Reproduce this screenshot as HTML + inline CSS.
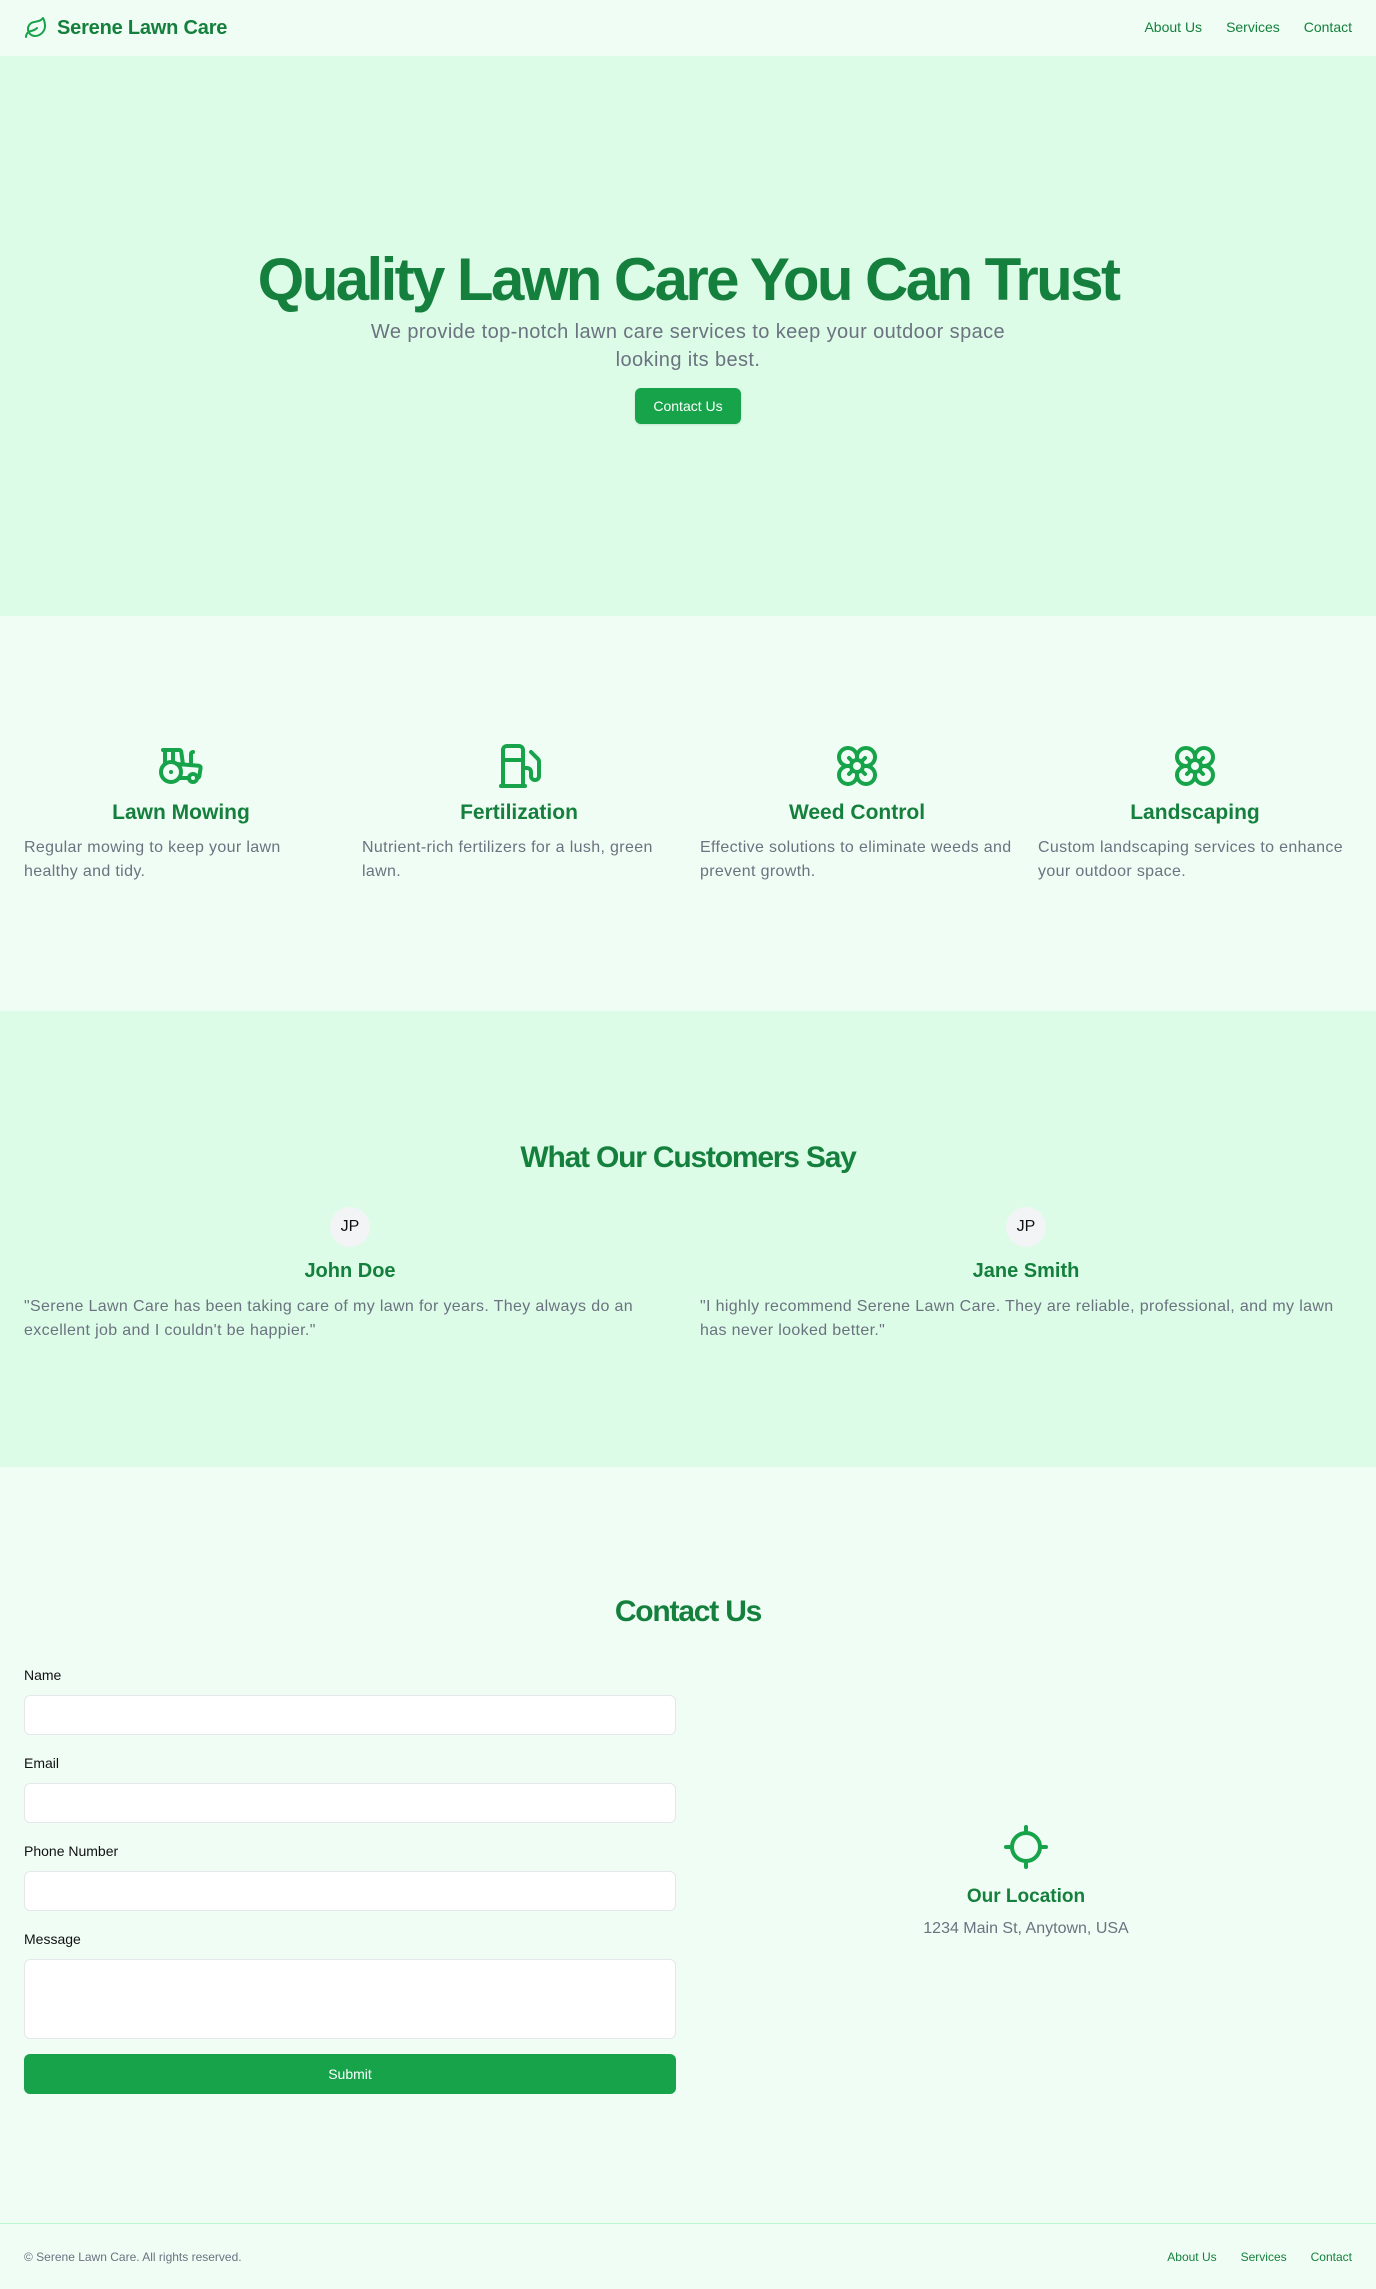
<!DOCTYPE html>
<html><head><meta charset="utf-8">
<style>
*{box-sizing:border-box;margin:0;padding:0}
body{width:1376px;height:2289px;background:#f0fdf4;font-family:"Liberation Sans",Arial,sans-serif;color:#111;overflow:hidden}
header{height:56px;display:flex;align-items:center;justify-content:space-between;padding:0 24px;background:#f0fdf4}
.logo{display:flex;align-items:center;gap:9px;color:#15803d;font-weight:700;font-size:20px;letter-spacing:-0.2px}
nav a,footer nav a{color:#15803d;text-decoration:none;font-size:14px;margin-left:24px}
.hero{height:560px;background:#dcfce7;text-align:center;position:relative}
.hero h1{position:absolute;top:188px;left:0;right:0;font-size:60px;font-weight:800;color:#15803d;letter-spacing:-2.6px;line-height:72px}
.hero p{position:absolute;top:262px;left:50%;transform:translateX(-50%);width:680px;font-size:20px;line-height:28px;color:#6b7280;letter-spacing:0.4px}
.btn{position:absolute;top:332px;left:635px;width:106px;height:36px;background:#16a34a;color:#fff;border-radius:6px;font-size:14px;line-height:36px;box-shadow:0 1px 2px rgba(0,0,0,.1)}
.services{height:395px;position:relative}
.svc{position:absolute;top:126px;width:314px;text-align:center}
.svc svg{width:48px;height:48px;display:block;margin:0 auto}
.svc h3{font-size:21px;color:#15803d;font-weight:700;margin-top:9px;line-height:28px}
.svc p{text-align:left;font-size:16px;line-height:24px;color:#6b7280;margin-top:9px;letter-spacing:0.35px}
.testi{height:456px;background:#dcfce7;position:relative}
.testi h2,.contact h2{position:absolute;left:0;right:0;text-align:center;font-size:30px;font-weight:800;color:#15803d;letter-spacing:-1.2px}
.tc{position:absolute;top:196px;width:652px;text-align:center}
.av{width:40px;height:40px;border-radius:50%;background:#f3f4f6;margin:0 auto;line-height:40px;font-size:16px;color:#111}
.tc h3{font-size:20px;font-weight:700;color:#15803d;margin-top:10px;line-height:28px}
.tc p{text-align:left;font-size:16px;line-height:24px;color:#6b7280;margin-top:10px;letter-spacing:0.35px}
.contact{height:756px;position:relative}
label{position:absolute;left:24px;font-size:14px;color:#111}
.inp{position:absolute;left:24px;width:652px;height:40px;background:#fff;border:1px solid #e5e7eb;border-radius:6px}
.sub{position:absolute;left:24px;top:587px;width:652px;height:40px;background:#16a34a;border-radius:6px;color:#fff;text-align:center;line-height:40px;font-size:14px}
.loc{position:absolute;left:700px;width:652px;top:356px;text-align:center}
.loc h3{font-size:19px;color:#15803d;font-weight:700;margin-top:10px}
.loc p{font-size:16px;color:#6b7280;margin-top:12px}
footer{height:66px;border-top:1px solid #bbf7d0;display:flex;align-items:center;justify-content:space-between;padding:0 24px}
footer span{font-size:12px;color:#6b7280}
footer nav a{font-size:12px;margin-left:24px}
</style></head><body>
<header>
<div class="logo"><svg width="24" height="24" viewBox="0 0 24 24" fill="none" stroke="#16a34a" stroke-width="2" stroke-linecap="round" stroke-linejoin="round"><path d="M11 20A7 7 0 0 1 9.8 6.1C15.5 5 17 4.48 19 2c1 2 2 4.18 2 8 0 5.5-4.78 10-10 10Z"/><path d="M2 21c0-3 1.85-5.36 5.08-6C9.5 14.52 12 13 13 12"/></svg>Serene Lawn Care</div>
<nav><a>About Us</a><a>Services</a><a>Contact</a></nav>
</header>
<section class="hero">
<h1>Quality Lawn Care You Can Trust</h1>
<p>We provide top-notch lawn care services to keep your outdoor space looking its best.</p>
<div class="btn">Contact Us</div>
</section>
<section class="services">
<div class="svc" style="left:24px"><svg viewBox="0 0 24 24" fill="none" stroke="#16a34a" stroke-width="2" stroke-linecap="round" stroke-linejoin="round"><path d="m10 11 11 .9a1 1 0 0 1 .8 1.1l-.665 4.158a1 1 0 0 1-.988.842H20"/><path d="M16 18h-5"/><path d="M18 5a1 1 0 0 0-1 1v5.573"/><path d="M3 4h8.129a1 1 0 0 1 .99.863L13 11.246"/><path d="M4 11V4"/><path d="M7 15h.01"/><path d="M8 10.1V4"/><circle cx="18" cy="18" r="2"/><circle cx="7" cy="15" r="5"/></svg><h3>Lawn Mowing</h3><p>Regular mowing to keep your lawn healthy and tidy.</p></div>
<div class="svc" style="left:362px"><svg viewBox="0 0 24 24" fill="none" stroke="#16a34a" stroke-width="2" stroke-linecap="round" stroke-linejoin="round"><line x1="3" x2="15" y1="22" y2="22"/><line x1="4" x2="14" y1="9" y2="9"/><path d="M14 22V4a2 2 0 0 0-2-2H6a2 2 0 0 0-2 2v18"/><path d="M14 13h2a2 2 0 0 1 2 2v2a2 2 0 0 0 2 2a2 2 0 0 0 2-2V9.83a2 2 0 0 0-.59-1.420L18 5"/></svg><h3>Fertilization</h3><p>Nutrient-rich fertilizers for a lush, green lawn.</p></div>
<div class="svc" style="left:700px"><svg viewBox="0 0 24 24" fill="none" stroke="#16a34a" stroke-width="2" stroke-linecap="round" stroke-linejoin="round"><circle cx="12" cy="12" r="3"/><path d="M12 16.5A4.5 4.5 0 1 1 7.5 12 4.5 4.5 0 1 1 12 7.5a4.5 4.5 0 1 1 4.5 4.5 4.5 4.5 0 1 1-4.5 4.5"/><path d="M12 7.5V9"/><path d="M7.5 12H9"/><path d="M16.5 12H15"/><path d="M12 16.5V15"/><path d="m8 8 1.88 1.88"/><path d="M14.12 9.88 16 8"/><path d="m8 16 1.88-1.88"/><path d="M14.12 14.12 16 16"/></svg><h3>Weed Control</h3><p>Effective solutions to eliminate weeds and prevent growth.</p></div>
<div class="svc" style="left:1038px"><svg viewBox="0 0 24 24" fill="none" stroke="#16a34a" stroke-width="2" stroke-linecap="round" stroke-linejoin="round"><circle cx="12" cy="12" r="3"/><path d="M12 16.5A4.5 4.5 0 1 1 7.5 12 4.5 4.5 0 1 1 12 7.5a4.5 4.5 0 1 1 4.5 4.5 4.5 4.5 0 1 1-4.5 4.5"/><path d="M12 7.5V9"/><path d="M7.5 12H9"/><path d="M16.5 12H15"/><path d="M12 16.5V15"/><path d="m8 8 1.88 1.88"/><path d="M14.12 9.88 16 8"/><path d="m8 16 1.88-1.88"/><path d="M14.12 14.12 16 16"/></svg><h3>Landscaping</h3><p>Custom landscaping services to enhance your outdoor space.</p></div>
</section>
<section class="testi">
<h2 style="top:130px">What Our Customers Say</h2>
<div class="tc" style="left:24px"><div class="av">JP</div><h3>John Doe</h3><p>"Serene Lawn Care has been taking care of my lawn for years. They always do an excellent job and I couldn't be happier."</p></div>
<div class="tc" style="left:700px"><div class="av">JP</div><h3>Jane Smith</h3><p>"I highly recommend Serene Lawn Care. They are reliable, professional, and my lawn has never looked better."</p></div>
</section>
<section class="contact">
<h2 style="top:128px">Contact Us</h2>
<label style="top:200px">Name</label><div class="inp" style="top:228px"></div>
<label style="top:288px">Email</label><div class="inp" style="top:316px"></div>
<label style="top:376px">Phone Number</label><div class="inp" style="top:404px"></div>
<label style="top:464px">Message</label><div class="inp" style="top:492px;height:80px"></div>
<div class="sub">Submit</div>
<div class="loc"><svg width="48" height="48" viewBox="0 0 24 24" fill="none" stroke="#16a34a" stroke-width="2" stroke-linecap="round" stroke-linejoin="round"><line x1="2" x2="5" y1="12" y2="12"/><line x1="19" x2="22" y1="12" y2="12"/><line x1="12" x2="12" y1="2" y2="5"/><line x1="12" x2="12" y1="19" y2="22"/><circle cx="12" cy="12" r="7"/></svg><h3>Our Location</h3><p>1234 Main St, Anytown, USA</p></div>
</section>
<footer><span>© Serene Lawn Care. All rights reserved.</span><nav><a>About Us</a><a>Services</a><a>Contact</a></nav></footer>
</body></html>
